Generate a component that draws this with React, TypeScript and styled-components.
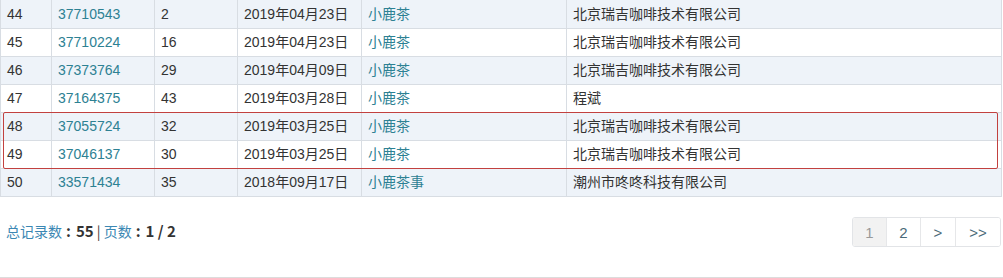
import React from 'react';
import styled, { createGlobalStyle } from 'styled-components';

const GlobalStyle = createGlobalStyle`
  html, body {
    margin: 0;
    padding: 0;
    background: #fff;
  }
  body {
    font-family: "Liberation Sans", "Noto Sans CJK SC", sans-serif;
    font-size: 14px;
    color: #333;
  }
`;

const Page = styled.div`
  width: 1003px;
  height: 278px;
  position: relative;
  overflow: hidden;
  border-bottom: 1px solid #dcdcdc;
  box-sizing: border-box;
`;

const TableWrap = styled.div`
  position: relative;
  width: 1002px;
`;

const Table = styled.table`
  width: 1002px;
  border-collapse: collapse;
  table-layout: fixed;
  border-left: 1px solid #d8dde3;
  border-right: 1px solid #d8dde3;
`;

const Row = styled.tr<{ $striped: boolean }>`
  background: ${p => (p.$striped ? '#eef3f9' : '#fff')};
  &:first-child td {
    height: 28px;
  }
`;

const Cell = styled.td`
  height: 27px;
  padding: 0 0 0 6px;
  border: 1px solid #d8dde3;
  border-top: none;
  white-space: nowrap;
  overflow: hidden;
  vertical-align: middle;
  line-height: 27px;
`;

const Link = styled.a`
  color: #2d8193;
  text-decoration: none;
`;

// annotation drawn over rows 48-49
const Highlight = styled.div`
  position: absolute;
  left: 3px;
  top: 112px;
  width: 995px;
  height: 57px;
  border: 1.5px solid #c2413f;
  border-radius: 2px;
  box-sizing: border-box;
  pointer-events: none;
`;

const Footer = styled.div`
  display: flex;
  justify-content: space-between;
  align-items: center;
  padding: 20px 2px 0 6px;
`;

const Summary = styled.div`
  font-family: "Noto Sans CJK SC", "Liberation Sans", sans-serif;
  font-size: 14px;
  color: #333;
  margin-top: -4px;
`;

const Label = styled.span`
  color: #3b87b3;
`;

const Strong = styled.b`
  font-weight: 700;
  font-size: 15px;
  color: #333;
`;

const Colon = styled.b`
  font-weight: 700;
  font-size: 15px;
  color: #333;
  margin: 0 5px 0 4px;
`;

const Pager = styled.div`
  display: flex;
  border: 1px solid #e2e4e7;
  border-radius: 3px;
  overflow: hidden;
  height: 28px;
`;

const PageButton = styled.span<{ $active?: boolean; $w: number }>`
  width: ${p => p.$w}px;
  display: flex;
  align-items: center;
  justify-content: center;
  font-size: 15px;
  color: ${p => (p.$active ? '#999' : '#4b6a78')};
  background: ${p => (p.$active ? '#f2f2f2' : '#fff')};
  & + & {
    border-left: 1px solid #e6e7e9;
  }
`;

const rows = [
  ['44', '37710543', '2', '2019年04月23日', '小鹿茶', '北京瑞吉咖啡技术有限公司'],
  ['45', '37710224', '16', '2019年04月23日', '小鹿茶', '北京瑞吉咖啡技术有限公司'],
  ['46', '37373764', '29', '2019年04月09日', '小鹿茶', '北京瑞吉咖啡技术有限公司'],
  ['47', '37164375', '43', '2019年03月28日', '小鹿茶', '程斌'],
  ['48', '37055724', '32', '2019年03月25日', '小鹿茶', '北京瑞吉咖啡技术有限公司'],
  ['49', '37046137', '30', '2019年03月25日', '小鹿茶', '北京瑞吉咖啡技术有限公司'],
  ['50', '33571434', '35', '2018年09月17日', '小鹿茶事', '潮州市咚咚科技有限公司'],
];

const widths = [51, 103, 83, 124, 205, 435];

export default function App() {
  return (
    <Page>
      <GlobalStyle />
      <TableWrap>
        <Table>
          <colgroup>
            {widths.map((w, i) => <col key={i} style={{ width: w }} />)}
          </colgroup>
          <tbody>
            {rows.map((r, i) => (
              <Row key={r[0]} $striped={i % 2 === 0}>
                <Cell>{r[0]}</Cell>
                <Cell><Link href="#">{r[1]}</Link></Cell>
                <Cell>{r[2]}</Cell>
                <Cell>{r[3]}</Cell>
                <Cell><Link href="#">{r[4]}</Link></Cell>
                <Cell>{r[5]}</Cell>
              </Row>
            ))}
          </tbody>
        </Table>
        <Highlight />
      </TableWrap>
      <Footer>
        <Summary>
          <Label>总记录数</Label><Colon>:</Colon><Strong>55</Strong> | <Label>页数</Label><Colon>:</Colon><Strong>1 / 2</Strong>
        </Summary>
        <Pager>
          <PageButton $active $w={33}>1</PageButton>
          <PageButton $w={33}>2</PageButton>
          <PageButton $w={34}>&gt;</PageButton>
          <PageButton $w={44}>&gt;&gt;</PageButton>
        </Pager>
      </Footer>
    </Page>
  );
}
